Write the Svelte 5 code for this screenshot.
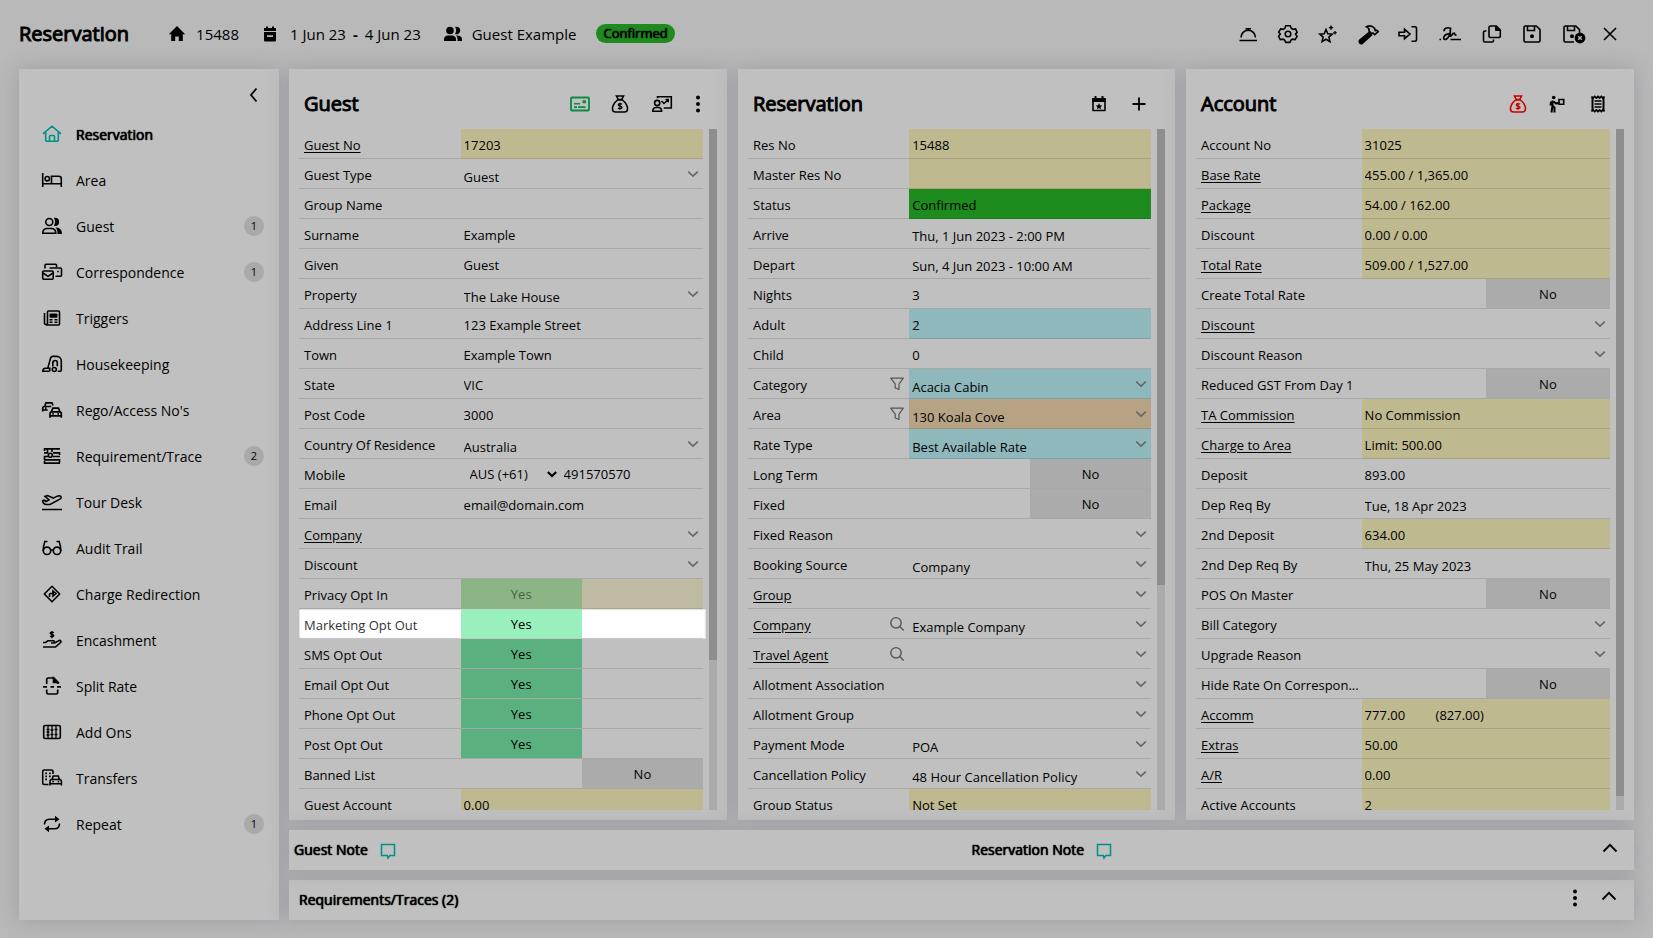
<script>
  const icons = {
    home: '<path d="M12 4 3.800 12.200h2.400V19h4v-4.500h3.600V19h4v-6.800h2.400z" fill="currentColor" stroke="none"/>',
    calendar: '<path d="M5 6h2V4.500h2V6h4V4.500h2V6h2v3H5zM5 10h12v8.500a1 1 0 0 1-1 1H6a1 1 0 0 1-1-1zM8 13.200v1.800h6v-1.800z" fill="currentColor" stroke="none" fill-rule="evenodd"/>',
    people: '<g fill="currentColor" stroke="none"><circle cx="9" cy="8.500" r="3.800"/><path d="M14 5a3.800 3.800 0 1 1 0 7c1.600-2 1.600-5 0-7zM3 19v-2c0-2 2-3.500 4-3.500h4c2 0 4 1.500 4 3.500v2zM16 13.500c3 0 5 1.500 5 3.500v2h-4.500v-2c0-1.400-.5-2.600-1.500-3.500z"/></g>',
    bell: '<path d="M3.500 18.500h17.500M5 15.500a7.200 7.200 0 0 1 14.400 0M9.500 6.700h5.500M12.200 7v1.500"/>',
    gear: '<path d="M9.800 3.800h4.400l1 2.500 1.800 1 2.600-.4 1.500 3.500-1.600 1.700 1.600 2.200-2 3.300-2.800-.4-1.400 1-1 2.200H9.800l-1.200-2.300-1.600-.9-2.700.4-1.700-3.300 1.700-2.200-1.600-1.900 2-3.300 2.600.4 1.500-1z"/><circle cx="12" cy="12" r="2.800"/>',
    star: '<path d="m10 7.500 1.800 4.200 4.400.4-3.300 3 1 4.500L10 17.200l-3.900 2.400 1-4.500-3.300-3 4.400-.4z"/><path d="m15 3.500.6 1.600 1.600.6-1.600.6-.6 1.600-.6-1.600-1.600-.6 1.600-.6zM19 9l.5 1.200 1.200.5-1.200.5-.5 1.200-.5-1.200-1.200-.5 1.200-.5z" fill="currentColor" stroke-width=".6"/>',
    hammer: '<path d="m13 10.500 2.500 2.500-8.700 8a2 2 0 0 1-3-2.900z" fill="currentColor"/><path d="M10.500 4.800c3-1.600 6-.8 8 1.400l.8 2.500 1.500-.6 1.400 1.600-3.500 3-1.700-1.700-1.300.6-2.700-2.600c.4-2-.6-3.400-2.500-4.200z"/>',
    enter: '<path d="M3 10.200h5.500V7.300L14 12l-5.500 4.700v-2.900H3zM15.500 4.800H19a1.500 1.500 0 0 1 1.500 1.500v11.400a1.500 1.500 0 0 1-1.500 1.500h-3.500"/>',
    signature: '<path d="M1.500 17.500h1.600M6.300 9.300C5.500 6.500 9 5 12.500 6.200c0 4-1.500 9-4 10.800-1.500 1-3.200.3-2.800-1.400.5-2.300 3.800-3.700 6.500-3.900-.4 1.300-.8 2.600.3 2.400 1.300-.3 2-3 3.500-3 1.300 0-.2 2.200 2.500 2M12.500 17.500H23" stroke-width="1.700"/>',
    copy: '<path d="M10.500 4h5.800l4 4v6a1.500 1.500 0 0 1-1.500 1.500h-8.300A1.500 1.500 0 0 1 9 14V5.500A1.500 1.500 0 0 1 10.500 4zM6.500 9H5a1.500 1.500 0 0 0-1.500 1.500v8A1.500 1.500 0 0 0 5 20h7a1.500 1.500 0 0 0 1.500-1.500v-1"/><path d="M15.500 4v4.500h4.500z" fill="currentColor" stroke-width="1"/>',
    save: '<path d="M5.500 4h10.800L20 7.700v10.800a1.500 1.500 0 0 1-1.500 1.500h-13A1.500 1.500 0 0 1 4 18.500v-13A1.500 1.500 0 0 1 5.500 4zM7.500 4v4.500h7V4"/><circle cx="12" cy="14.300" r="2" fill="currentColor" stroke="none"/>',
    saveClose: '<path d="M12 20H3.500A1.500 1.500 0 0 1 2 18.500v-13A1.500 1.500 0 0 1 3.500 4h10.300l3.700 3.700v3M5.500 4v4.500h7V4"/><circle cx="10" cy="14.200" r="2" fill="currentColor" stroke="none"/><circle cx="18" cy="16" r="5.400" fill="currentColor" stroke="none"/><path d="m16.200 14.200 3.600 3.600m0-3.600-3.600 3.600" stroke="#b9b9b9" stroke-width="1.300"/>',
    close: '<path d="m6 6 12 12M18 6 6 18"/>',
    card: '<rect x="3" y="5.500" width="18" height="13" rx="1" stroke-width="1.800"/><path d="M14.500 8.200h3.500v3h-3.500zM6 11h6v1.500H6zM6 14.300h3v1.700H6zM10 14.300h7.500V16H10z" fill="currentColor" stroke="none"/>',
    bag: '<path d="M8.500 4h7l-1.800 3.500h-3.400zM9.500 8C7 10 4.500 13.500 4.500 17c0 2 1 3 3 3h9c2 0 3-1 3-3 0-3.500-2.500-7-5-9z"/><path d="M14 12.200c-1-.8-3.700-.8-3.700.6 0 1.700 3.700 1 3.700 2.700 0 1.500-2.800 1.500-4 .5M12 10.800v7" stroke-width="1.300"/>',
    present: '<circle cx="7.200" cy="11" r="2.600"/><path d="M2.800 19.200c0-2.600 1.600-3.700 3.400-3.700h2.200c1.900 0 3.200 1.200 3.200 3.700zM7.500 6.300V4.800h13.800V16h-7.600M11.500 9l2.500 2.500L18 8M15.500 7.500h2.700v2.700"/>',
    dots: '<g fill="currentColor" stroke="none"><circle cx="12" cy="5.500" r="2"/><circle cx="12" cy="12" r="2"/><circle cx="12" cy="18.500" r="2"/></g>',
    eventStar: '<path d="M6 7h12v11.500H6z" stroke-width="1.600" stroke-linejoin="round"/><path d="M5.300 6h13.400v4H5.300zM7.500 4h2v3h-2zM14.500 4h2v3h-2z" fill="currentColor" stroke="none"/><path d="m12 11 1 2.200 2.300.2-1.700 1.600.5 2.300-2.100-1.200-2.100 1.200.5-2.300-1.700-1.600 2.300-.2z" fill="currentColor" stroke="none"/>',
    plus: '<path d="M12 5.500v13M5.500 12h13" stroke-width="1.800"/>',
    porter: '<circle cx="7.700" cy="5.500" r="1.800" fill="currentColor" stroke="none"/><path d="M6.500 8.500v5l2 2.200v4.800M6.500 13.500 5.500 20.500M7.700 9.500l2.500 2.200 3-1.200M5 9.500l-.5 4" stroke-width="2"/><path d="M13 7.500h4.700v4.700H13z"/>',
    receipt: '<path d="M6.500 5v14M17.500 5v14" stroke-width="2"/><path d="M5.500 4.500 7 6l1.700-1.500L10.300 6 12 4.500 13.700 6l1.600-1.500L17 6l1.500-1.500M5.500 19.500 7 18l1.700 1.500 1.600-1.500 1.700 1.500 1.700-1.500 1.600 1.500L17 18l1.500 1.500M8.500 9h7M8.500 12h7M8.500 15h7" stroke-width="1.700"/>',
    house: '<path d="m3 11.800 9-7.600 9 7.600M5.700 9.800v8.400a1 1 0 0 0 1 1h10.600a1 1 0 0 0 1-1V9.800M9.500 19v-4.500a1 1 0 0 1 1-1h3a1 1 0 0 1 1 1V19"/>',
    bed: '<path d="M2.700 5v14M2.700 15.700h18.600M21.300 19v-8.200a2.500 2.500 0 0 0-2.500-2.500h-7.300v7.200"/><circle cx="7.300" cy="10.700" r="2.200"/>',
    users: '<circle cx="9.300" cy="8" r="3.500"/><path d="M2.800 19.200c0-3 2-4.700 4.500-4.700h4c2.600 0 4.500 1.700 4.500 4.700z"/><path d="M13.800 3.800h1.200a4.100 4.100 0 0 1 0 8.200h-1.200c1.700-2.300 1.700-5.900 0-8.200zM15.500 13.500c4 0 6.500 2 6.500 6.500h-4.500c0-3-.3-4.700-2-6.500z" fill="currentColor" stroke="none"/>',
    mails: '<rect x="2.700" y="11" width="10.500" height="8.300" rx="1"/><path d="m3 13 5 3.300 5-3.300M5 8.500V5.300a1 1 0 0 1 1-1h9.500a1 1 0 0 1 1 1V7M9.500 8h11a1 1 0 0 1 1 1v6.300a1 1 0 0 1-1 1h-5M18 10.700v1.500"/>',
    news: '<path d="M4.500 7v10.500a1.600 1.600 0 0 0 3 0V6a1 1 0 0 1 1-1H18.500a1 1 0 0 1 1 1v12a1 1 0 0 1-1 1H6"/><path d="M10 8h7v3.200h-7z" fill="currentColor" stroke-width="1"/><path d="M9.500 13.700h3M14.500 13.700h3M9.500 16.300h3M14.500 16.300h3"/>',
    vacuum: '<path d="M9.500 19.200H2.800c0-2 1-3 2.700-3h2.300l2.700-10a2.500 2.500 0 0 1 2.400-1.800h4a4.500 4.500 0 0 1 4.400 4.500v9.300a1 1 0 0 1-1 1h-2.500M7.800 16.200h2v3M12.800 14.500V11a2.500 2.500 0 0 1 2.500-2.500c1.500 0 2 .8 2 2.200v3.500"/><circle cx="14.300" cy="17.500" r="2"/>',
    cars: '<path d="M10 19.800v-4.300a1.700 1.700 0 0 1 1.700-1.700h7.900a1.700 1.700 0 0 1 1.700 1.700v4.300M10 17.800h11.300M11.500 13.800l1.300-3.600h5.700l1.300 3.600M12.300 15.800h1.500M17.500 15.800h1.500M2.700 13.500v-3.300A1.700 1.700 0 0 1 4.400 8.500h6.800M4.700 8.500l1.200-3.700h6L13 7.500M2.700 12h5M5 10.300h1.500" stroke-width="1.700"/>',
    list: '<path d="M4 4.800h16M4 19.200h16M4 8.800h4M13 8.800h7M4 12.500h4M13 12.500h7M4 15.900h16" stroke-width="1.700"/><path d="M7.500 5v4M12 5v3M4.500 4v3M4.500 12v4M19.500 8v3M19.500 15v4M4.500 17v3"/><circle cx="10.300" cy="11.200" r="2"/>',
    plane: '<path d="M2 19.500h20M6 14.500h4l10.300-5.600c1.400-.9 1-3-1-3.100-1 0-2 .3-3 .8l-3 1.500L7.500 5.500 5 6.400l4 3.500-3 1.600L3.800 10l-1.300 1c.6 2 1.700 3.500 3.500 3.500z"/>',
    glasses: '<circle cx="7" cy="14.800" r="3.700"/><circle cx="17" cy="14.800" r="3.700"/><path d="M3.200 15c0-4 .8-7.300 1.600-9.500h2.700M20.800 15c0-4-.8-7.300-1.600-9.500h-2.700M10.700 14h2.600"/>',
    direction: '<path d="m12 4.300 7.700 7.700-7.700 7.700L4.300 12z" stroke-linejoin="round"/><path d="M9.500 15v-2.500a1 1 0 0 1 1-1H14M13 9l3 2.500-3 2.500z" fill="none"/>',
    hand: '<path d="M3 14.500h2.500l2.500-1.700h5.500c1.400 0 1.400 2.200 0 2.200H11M14.500 15l4.500-2.400c1.600-.7 2.700 1 1.500 2L15.500 19H3"/><path d="M13.800 4.800c-1-.8-3.600-.7-3.600.5 0 1.500 3.600.8 3.600 2.300 0 1.300-2.700 1.300-3.700.5M12 3v7.300" stroke-width="1.400"/>',
    split: '<path d="M6.700 10V5.500A1.500 1.500 0 0 1 8.200 4h5.600l4 4v2M6.700 15.500v3A1.500 1.500 0 0 0 8.200 20h8a1.500 1.500 0 0 0 1.500-1.500v-3M3 12.800h4M10.500 12.800h3.500M17 12.800h4" stroke-width="1.700"/><path d="M13.500 4v4.500H18z" fill="currentColor"/>',
    abacus: '<rect x="3.700" y="5.500" width="16.600" height="13" rx="1.500"/><path d="M8 5.500v13M12 5.500v13M16 5.500v13" stroke-width="1.300"/><path d="M6.500 9.500h3M6.500 12h3M10.500 10h3M10.500 14.500h3M6.500 15h3M14.500 9.500h3M14.500 14.500h3"/>',
    transfer: '<path d="M8.500 18.500H4.200a1.500 1.500 0 0 1-1.500-1.500V5.500A1.500 1.500 0 0 1 4.200 4h7.300A1.500 1.500 0 0 1 13 5.500V8M10 19.500v-4.300a1.700 1.700 0 0 1 1.700-1.700h8a1.700 1.700 0 0 1 1.700 1.700v4.300M10 17.800h11.300M12 13.500l1.200-3.500h5l1.300 3.500"/><path d="M5.300 7.300H7M9 7.300h1.700M5.300 10.300H7M9 10.300h1.700M5.300 13.300H7M12.300 15.600h1.500M17.700 15.600h1.500" stroke-width="1.700"/>',
    repeat: '<path d="M4.500 12.500c0-3.500 2-5.300 5-5.300h8M19.500 11.500c0 3.500-2 5.300-5 5.300h-8" stroke-width="1.600"/><path d="m15 3.800 4.500 3.400L15 10.600zM9 13.400l-4.500 3.400L9 20.200z" fill="currentColor" stroke="none"/>',
    left: '<path d="m14.500 5.500-5.500 6.500 5.500 6.500" stroke-width="1.800"/>',
    up: '<path d="m5.500 13.500 6.500-6.700 6.500 6.700" stroke-width="1.900"/>',
    down: '<path d="m7.200 9.700 4.800 4.500 4.800-4.500"/>',
    nativeDown: '<path d="m7.800 10 4.200 4 4.200-4" stroke-width="2.300"/>',
    filter: '<path d="M5.700 6.200h12.600l-4.300 6v5.300l-3.800-1.500v-3.800z" stroke-width="1.200" stroke-linejoin="round"/>',
    search: '<circle cx="11" cy="10.800" r="5.200" stroke-width="1.400"/><path d="m14.900 14.700 3.800 3.800" stroke-width="1.400"/>',
    note: '<path d="M5.500 6.500h13v11h-4.700L12 20l-.7-2.500H5.500z" stroke-width="1.500"/>'
  };

  const tools = [
    ['bell', 'Reception'], ['gear', 'Settings'], ['star', 'Features'], ['hammer', 'Maintenance'], ['enter', 'Check in'],
    ['signature', 'Sign', 'wide'], ['copy', 'Copy'], ['save', 'Save'], ['saveClose', 'Save and close', 'wide'], ['close', 'Close', 'narrow']
  ];

  const menu = [
    { icon: 'house', text: 'Reservation', active: true },
    { icon: 'bed', text: 'Area' },
    { icon: 'users', text: 'Guest', count: 1 },
    { icon: 'mails', text: 'Correspondence', count: 1 },
    { icon: 'news', text: 'Triggers' },
    { icon: 'vacuum', text: 'Housekeeping' },
    { icon: 'cars', text: "Rego/Access No's" },
    { icon: 'list', text: 'Requirement/Trace', count: 2 },
    { icon: 'plane', text: 'Tour Desk' },
    { icon: 'glasses', text: 'Audit Trail' },
    { icon: 'direction', text: 'Charge Redirection' },
    { icon: 'hand', text: 'Encashment' },
    { icon: 'split', text: 'Split Rate' },
    { icon: 'abacus', text: 'Add Ons' },
    { icon: 'transfer', text: 'Transfers' },
    { icon: 'repeat', text: 'Repeat', count: 1 }
  ];

  const panels = [
    {
      id: 'guest',
      title: 'Guest',
      thumb: 78,
      actions: [['card', 'Guest card', 'green'], ['bag', 'Guest account'], ['present', 'Presentation', 'wide'], ['dots', 'More', 'narrow']],
      rows: [
        { label: 'Guest No', value: '17203', link: true, tone: 'yellow' },
        { label: 'Guest Type', value: 'Guest', type: 'select' },
        { label: 'Group Name', value: '' },
        { label: 'Surname', value: 'Example' },
        { label: 'Given', value: 'Guest' },
        { label: 'Property', value: 'The Lake House', type: 'select' },
        { label: 'Address Line 1', value: '123 Example Street' },
        { label: 'Town', value: 'Example Town' },
        { label: 'State', value: 'VIC' },
        { label: 'Post Code', value: '3000' },
        { label: 'Country Of Residence', value: 'Australia', type: 'select' },
        { label: 'Mobile', value: '491570570', type: 'phone' },
        { label: 'Email', value: 'email@domain.com' },
        { label: 'Company', value: '', type: 'select', link: true },
        { label: 'Discount', value: '', type: 'select' },
        { label: 'Privacy Opt In', value: 'Yes', type: 'toggle', locked: true },
        { label: 'Marketing Opt Out', value: 'Yes', type: 'toggle', focus: true },
        { label: 'SMS Opt Out', value: 'Yes', type: 'toggle' },
        { label: 'Email Opt Out', value: 'Yes', type: 'toggle' },
        { label: 'Phone Opt Out', value: 'Yes', type: 'toggle' },
        { label: 'Post Opt Out', value: 'Yes', type: 'toggle' },
        { label: 'Banned List', value: 'No', type: 'toggle' },
        { label: 'Guest Account', value: '0.00', tone: 'yellow' }
      ]
    },
    {
      id: 'reservation',
      title: 'Reservation',
      thumb: 67,
      actions: [['eventStar', 'Events'], ['plus', 'Add']],
      rows: [
        { label: 'Res No', value: '15488', tone: 'yellow' },
        { label: 'Master Res No', value: '', tone: 'yellow' },
        { label: 'Status', value: 'Confirmed', tone: 'confirmed' },
        { label: 'Arrive', value: 'Thu, 1 Jun 2023 - 2:00 PM', type: 'date' },
        { label: 'Depart', value: 'Sun, 4 Jun 2023 - 10:00 AM', type: 'date' },
        { label: 'Nights', value: '3' },
        { label: 'Adult', value: '2', tone: 'blue' },
        { label: 'Child', value: '0' },
        { label: 'Category', value: 'Acacia Cabin', type: 'select', tone: 'blue', icon: 'filter' },
        { label: 'Area', value: '130 Koala Cove', type: 'select', tone: 'orange', icon: 'filter' },
        { label: 'Rate Type', value: 'Best Available Rate', type: 'select', tone: 'blue' },
        { label: 'Long Term', value: 'No', type: 'toggle' },
        { label: 'Fixed', value: 'No', type: 'toggle' },
        { label: 'Fixed Reason', value: '', type: 'select' },
        { label: 'Booking Source', value: 'Company', type: 'select' },
        { label: 'Group', value: '', type: 'select', link: true },
        { label: 'Company', value: 'Example Company', type: 'select', link: true, icon: 'search' },
        { label: 'Travel Agent', value: '', type: 'select', link: true, icon: 'search' },
        { label: 'Allotment Association', value: '', type: 'select' },
        { label: 'Allotment Group', value: '', type: 'select' },
        { label: 'Payment Mode', value: 'POA', type: 'select' },
        { label: 'Cancellation Policy', value: '48 Hour Cancellation Policy', type: 'select' },
        { label: 'Group Status', value: 'Not Set', tone: 'yellow' }
      ]
    },
    {
      id: 'account',
      title: 'Account',
      thumb: 98,
      actions: [['bag', 'Account balance', 'red'], ['porter', 'Porter'], ['receipt', 'Receipt']],
      rows: [
        { label: 'Account No', value: '31025', tone: 'yellow' },
        { label: 'Base Rate', value: '455.00 / 1,365.00', link: true, tone: 'yellow' },
        { label: 'Package', value: '54.00 / 162.00', link: true, tone: 'yellow' },
        { label: 'Discount', value: '0.00 / 0.00', tone: 'yellow' },
        { label: 'Total Rate', value: '509.00 / 1,527.00', link: true, tone: 'yellow' },
        { label: 'Create Total Rate', value: 'No', type: 'toggle' },
        { label: 'Discount', value: '', type: 'select', link: true },
        { label: 'Discount Reason', value: '', type: 'select' },
        { label: 'Reduced GST From Day 1', value: 'No', type: 'toggle' },
        { label: 'TA Commission', value: 'No Commission', link: true, tone: 'yellow' },
        { label: 'Charge to Area', value: 'Limit: 500.00', link: true, tone: 'yellow' },
        { label: 'Deposit', value: '893.00' },
        { label: 'Dep Req By', value: 'Tue, 18 Apr 2023', type: 'date' },
        { label: '2nd Deposit', value: '634.00', tone: 'yellow' },
        { label: '2nd Dep Req By', value: 'Thu, 25 May 2023', type: 'date' },
        { label: 'POS On Master', value: 'No', type: 'toggle' },
        { label: 'Bill Category', value: '', type: 'select' },
        { label: 'Upgrade Reason', value: '', type: 'select' },
        { label: 'Hide Rate On Correspon...', value: 'No', type: 'toggle' },
        { label: 'Accomm', value: '777.00         (827.00)', link: true, tone: 'yellow' },
        { label: 'Extras', value: '50.00', link: true, tone: 'yellow' },
        { label: 'A/R', value: '0.00', link: true, tone: 'yellow' },
        { label: 'Active Accounts', value: '2', tone: 'yellow' }
      ]
    }
  ];
</script>

{#snippet icon(name)}
  <svg class="icon" viewBox="0 0 24 24" aria-hidden="true">{@html icons[name]}</svg>
{/snippet}

{#snippet field(row, id)}
  <div class="row" class:focus={row.focus}>
    <div class="name">
      {#if row.link}
        <a href="#{id}" id="{id}-name">{row.label}</a>
      {:else}
        <label for={id} id="{id}-name">{row.label}</label>
      {/if}
      {#if row.icon}
        <button class="lookup" aria-label="{row.icon} {row.label}">{@render icon(row.icon)}</button>
      {/if}
    </div>
    <div class="value {row.tone || ''} {row.type || ''}" class:locked={row.locked}>
      {#if row.type === 'select'}
        <select {id} aria-labelledby="{id}-name"><option>{row.value}</option></select>
        {@render icon('down')}
      {:else if row.type === 'toggle'}
        <button {id} class:on={row.value === 'Yes'} aria-labelledby="{id}-name {id}" disabled={row.locked}>{row.value}</button>
      {:else if row.type === 'phone'}
        <div class="code">
          <select aria-label="Country code"><option>AUS (+61)</option></select>
          {@render icon('nativeDown')}
        </div>
        <input {id} type="tel" value={row.value} />
      {:else}
        <input {id} type="text" value={row.value} readonly={row.tone === 'yellow'} aria-labelledby="{id}-name" />
      {/if}
    </div>
  </div>
{/snippet}

<div class="page">
  <header>
    <h1>Reservation</h1>
    <div class="fact">{@render icon('home')}<span>15488</span></div>
    <div class="fact">{@render icon('calendar')}<span>1 Jun 23</span><b>-</b><span>4 Jun 23</span></div>
    <div class="fact">{@render icon('people')}<span>Guest Example</span></div>
    <span class="pill">Confirmed</span>
    <div class="tools">
      {#each tools as [name, title, size]}
        <button class="tool {size || ''}" aria-label={title}>{@render icon(name)}</button>
      {/each}
    </div>
  </header>

  <main>
    <nav class="card">
      <div class="collapse">
        <button class="tool" aria-label="Collapse menu">{@render icon('left')}</button>
      </div>
      {#each menu as item}
        <a class="item" class:active={item.active} href="#{item.icon}">
          {@render icon(item.icon)}
          <span class="text">{item.text}</span>
          {#if item.count}<span class="count">{item.count}</span>{/if}
        </a>
      {/each}
    </nav>

    <div class="content">
      <div class="panels">
        {#each panels as panel}
          <section class="card panel {panel.id}">
            <div class="panel-head">
              <h2>{panel.title}</h2>
              {#each panel.actions as [name, title, look]}
                <button class="tool {look || ''}" aria-label={title}>{@render icon(name)}</button>
              {/each}
            </div>
            <div class="scroll">
              <div class="rows">
                {#each panel.rows as row, i}
                  {@render field(row, panel.id + '-' + i)}
                {/each}
              </div>
              <div class="track"><div class="thumb" style="height: {panel.thumb}%"></div></div>
            </div>
          </section>
        {/each}
      </div>

      <section class="card bar notes">
        <div class="note"><h3>Guest Note</h3><button class="tool teal" aria-label="Edit guest note">{@render icon('note')}</button></div>
        <div class="note"><h3>Reservation Note</h3><button class="tool teal" aria-label="Edit reservation note">{@render icon('note')}</button></div>
        <button class="tool" aria-label="Expand notes">{@render icon('up')}</button>
      </section>

      <section class="card bar traces">
        <h3>Requirements/Traces (2)</h3>
        <button class="tool narrow" aria-label="More">{@render icon('dots')}</button>
        <button class="tool" aria-label="Expand requirements">{@render icon('up')}</button>
      </section>
    </div>
  </main>
</div>

<style>
  :global(body) {
    background: #b9b9b9;
  }

  .page {
    display: flex;
    flex-direction: column;
    height: 100vh;
    overflow: hidden;
    box-sizing: border-box;
    font-family: "Open Sans", "Noto Sans", sans-serif;
    font-size: 13px;
    color: #000;
  }

  h1, h2, h3 {
    margin: 0;
    font-weight: 400;
    white-space: nowrap;
  }

  h1, h2 {
    font-size: 20px;
    line-height: 28px;
    -webkit-text-stroke: 1px #000;
  }

  h3 {
    font-size: 14px;
    line-height: 20px;
  }

  h3, .pill, .active .text {
    text-shadow: 0 0 1px #000, 0 0 1px #000;
  }

  button, input, select {
    margin: 0;
    padding: 0;
    border: 0;
    border-radius: 0;
    background: none;
    font: inherit;
    color: inherit;
    outline: none;
    appearance: none;
  }

  button {
    cursor: pointer;
  }

  .icon {
    display: block;
    flex: none;
    width: 24px;
    height: 24px;
    fill: none;
    stroke: currentColor;
    stroke-width: 1.6;
  }

  .tool {
    display: flex;
    flex: none;
    align-items: center;
    justify-content: center;
    width: 40px;
    height: 40px;
  }

  .wide { width: 44px; }
  .narrow { width: 28px; }

  .green { color: #0b8a45; }
  .red { color: #c60000; }
  .teal { color: #009088; }

  header {
    display: flex;
    flex: none;
    align-items: center;
    gap: 20px;
    height: 69px;
    padding: 0 29px 2px 19px;
    box-sizing: border-box;
  }

  h1 {
    margin-right: 16px;
  }

  .fact {
    display: flex;
    align-items: center;
    gap: 7px;
    font-size: 15px;
    line-height: 20px;
    white-space: nowrap;
  }

  .pill {
    padding: 0 7px;
    border-radius: 10px;
    background: #1d8b1d;
    line-height: 19px;
  }

  .tools {
    display: flex;
    margin-left: auto;
  }

  main {
    display: grid;
    grid-template-columns: 260px minmax(0, 1fr);
    gap: 10px;
    flex: 1;
    min-height: 0;
    padding: 0 19px 18px;
  }

  .card {
    background: #c0c0c0;
    box-shadow: 0 0 20px rgba(92, 84, 108, 0.3);
  }

  .collapse {
    display: flex;
    justify-content: flex-end;
    height: 42px;
    padding: 6px 5px 0 0;
    box-sizing: border-box;
  }

  .item {
    display: flex;
    align-items: center;
    height: 46px;
    padding: 0 15px 0 21px;
    font-size: 14px;
    color: #000;
    text-decoration: none;
  }

  .text {
    flex: 1;
    margin-left: 12px;
  }

  .active .icon {
    color: #009088;
  }

  .count {
    width: 20px;
    border-radius: 50%;
    background: #a9a9a9;
    font-size: 11px;
    line-height: 20px;
    text-align: center;
  }

  .content {
    display: flex;
    flex-direction: column;
    gap: 10px;
    min-height: 0;
  }

  .panels {
    display: grid;
    grid-template-columns: minmax(0, 438fr) minmax(0, 437fr) minmax(0, 448fr);
    gap: 11px;
    flex: 1;
    min-height: 0;
  }

  .panel {
    display: flex;
    flex-direction: column;
    min-height: 0;
    padding-bottom: 10px;
  }

  .panel-head {
    display: flex;
    flex: none;
    align-items: center;
    height: 60px;
    padding: 9px 16px 0 15px;
    box-sizing: border-box;
  }

  .guest .panel-head {
    padding-right: 15px;
  }

  h2 {
    flex: 1;
  }

  .scroll {
    display: flex;
    flex: 1;
    min-height: 0;
    padding: 0 10px;
  }

  .rows {
    flex: 1;
    min-width: 0;
    padding-right: 6px;
    overflow: hidden;
  }

  .track {
    flex: none;
    width: 8px;
    background: #ababab;
  }

  .thumb {
    background: #8e8e8e;
  }

  .row {
    display: grid;
    grid-template-columns: minmax(0, 2fr) minmax(0, 3fr);
    height: 30px;
  }

  .name, .value {
    display: flex;
    min-width: 0;
    height: 30px;
    border-bottom: 1px solid rgba(0, 0, 0, 0.12);
    box-sizing: border-box;
  }

  .name {
    align-items: center;
    padding-left: 5px;
    white-space: nowrap;
  }

  .name a, .name label {
    flex: 1;
    padding-top: 2px;
    color: inherit;
    text-underline-offset: 2px;
  }

  .lookup {
    width: 24px;
    color: #555;
  }

  .value input {
    flex: 1;
    width: 0;
    padding: 2px 3px 0;
  }

  .date input {
    padding-top: 4px;
  }

  .select, .code {
    display: grid;
    grid-template-columns: minmax(0, 1fr);
    align-items: center;
  }

  .value select {
    grid-area: 1 / 1;
    width: 100%;
    height: 29px;
    padding: 6px 24px 0 3px;
  }

  .select .icon {
    grid-area: 1 / 1;
    justify-self: end;
    margin-right: -2px;
    color: #666;
    pointer-events: none;
  }

  .value .code select {
    padding: 0 0 0 9px;
  }

  .code {
    width: 100px;
  }

  .code .icon {
    grid-area: 1 / 1;
    justify-self: end;
    margin-right: -3px;
    pointer-events: none;
  }

  .phone input {
    padding-top: 0;
  }

  .yellow { background: #bfb98f; }
  .blue { background: #8fb8bd; }
  .orange { background: #b7a383; }
  .confirmed { background: #1d8b1d; }

  .toggle button {
    width: 50%;
    margin-left: auto;
    background: #ababab;
    text-align: center;
  }

  .toggle button.on {
    margin-left: 0;
    background: #5ab17f;
  }

  .locked {
    background: #bfbba3;
  }

  .locked button.on {
    background: #8cb585;
    color: #466045;
  }

  .focus {
    margin-right: -3px;
    padding-right: 3px;
    background: #fff;
    box-shadow: inset 0 0 2px #999;
  }

  .focus .name {
    color: #333;
  }

  .focus button.on {
    background: #98f0bd;
  }

  .bar {
    display: flex;
    flex: none;
    align-items: center;
    height: 40px;
  }

  .notes {
    position: relative;
  }

  .note {
    display: flex;
    flex: 1;
    align-items: center;
    padding-left: 15px;
  }

  .note:first-child {
    padding-left: 5px;
  }

  .notes > .tool {
    position: absolute;
    right: 4px;
  }

  .traces {
    padding: 0 5px 4px 10px;
    box-sizing: border-box;
  }

  .traces h3 {
    flex: 1;
    padding-top: 4px;
  }
</style>
